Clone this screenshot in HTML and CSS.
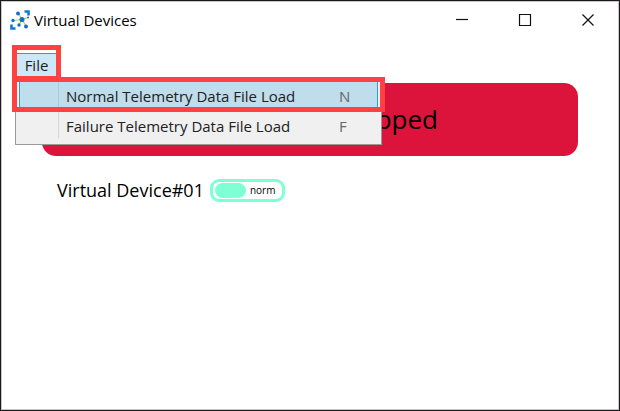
FILE: index.html
```html
<!DOCTYPE html>
<html lang="en">
<head>
<meta charset="utf-8">
<title>Virtual Devices</title>
<link rel="stylesheet" href="styles.css">
</head>
<body>
<div class="window">
  <header class="titlebar">
    <svg class="logo" viewBox="0 0 20 20" aria-hidden="true">
      <path d="M14.500 1.500h4v4M1.500 14.500v4h4" fill="none" stroke="#0f7bd4" stroke-width="2.600"/>
      <path d="M8 3L12 9.500L18 7.500M12 9.500L3 10.500M12 9.500L9 15M12 9.500L16 16" fill="none" stroke="#b4d455" stroke-width="1.200"/>
      <g fill="#0f6fc9">
        <circle cx="12" cy="9.500" r="2.500"/>
        <circle cx="8" cy="3.500" r="1.900"/>
        <circle cx="18" cy="7.500" r="1"/>
        <circle cx="3" cy="10.500" r="1.700"/>
        <circle cx="9" cy="15" r="1.700"/>
        <circle cx="16" cy="16.500" r="2"/>
      </g>
    </svg>
    <h1 class="title">Virtual Devices</h1>
    <div class="controls">
      <button class="control" type="button" aria-label="Minimize"><svg viewBox="0 0 14 14"><path d="M1 6.500h12"/></svg></button>
      <button class="control" type="button" aria-label="Maximize"><svg viewBox="0 0 14 14"><path d="M1.500 1.500h11v11h-11z"/></svg></button>
      <button class="control" type="button" aria-label="Close"><svg viewBox="0 0 14 14"><path d="M1.500 1.500l11 11M12.500 1.500l-11 11"/></svg></button>
    </div>
  </header>
  <nav class="menubar">
    <div class="menu">
      <button class="menu-button marked" type="button" aria-haspopup="true" aria-expanded="true">File</button>
      <div class="popup" role="menu">
        <button class="item active marked" type="button" role="menuitem"><span>Normal Telemetry Data File Load</span><kbd>N</kbd></button>
        <button class="item" type="button" role="menuitem"><span>Failure Telemetry Data File Load</span><kbd>F</kbd></button>
      </div>
    </div>
  </nav>
  <main class="content">
    <p class="status">Stopped</p>
    <div class="device">
      <span id="device-name">Virtual Device#01</span>
      <label class="toggle"><input type="checkbox" role="switch" aria-describedby="device-name">norm</label>
    </div>
  </main>
</div>
</body>
</html>
```
FILE: styles.css
```css
* {
  box-sizing: border-box;
}

body {
  margin: 0;
  font-family: "Open Sans", "Noto Sans", sans-serif;
  color: #000;
  background: #fff;
}

button {
  font: inherit;
  padding: 0;
  border: 0;
  background: none;
}

.window {
  min-height: 100vh;
  border: 1px solid #1c1a1d;
  box-shadow: inset 0 0 0 1px #c8c6c8;
}

.titlebar {
  display: flex;
  align-items: center;
  gap: 4px;
  height: 37px;
  padding: 0 0 0 9px;
}

.logo {
  width: 20px;
  height: 20px;
}

.title {
  margin: 0;
  font-size: 15px;
  font-weight: 400;
}

.controls {
  display: flex;
  margin-left: auto;
}

.control {
  display: grid;
  place-items: center;
  width: 63px;
  height: 37px;
}

.control svg {
  width: 14px;
  height: 14px;
  fill: none;
  stroke: #111;
  stroke-width: 1.2;
}

.menubar {
  padding: 15px 16px 0 15px;
}

.menu {
  position: relative;
  width: max-content;
}

.menu-button {
  display: block;
  width: 41px;
  height: 25px;
  border: 1px solid #26a0da;
  background: #cce8f6;
  font-size: 15px;
  line-height: 23px;
  color: #212121;
}

.marked {
  position: relative;
}

.marked::after {
  content: "";
  position: absolute;
  z-index: 1;
  border: 5px solid #ff4141;
}

.menu-button::after {
  inset: -9px -5px -4px -5px;
}

.popup {
  position: absolute;
  top: 24px;
  left: -1px;
  width: 367px;
  padding: 3px 3px 3px;
  border: 1px solid #999;
  background: linear-gradient(#d7d7d7, #d7d7d7) 42px 5px / 1px 55px no-repeat #f0f0f0;
}

.item {
  display: flex;
  justify-content: space-between;
  align-items: center;
  width: 100%;
  height: 30px;
  padding: 0 27px 0 47px;
  font-size: 15px;
  color: #212121;
}

.item.active {
  border: solid #26a0da;
  border-width: 0 1px;
  padding: 0 26px 0 46px;
  background: linear-gradient(#abc9d8, #abc9d8) 38px 0 / 1px 100% no-repeat #c0ddeb;
}

.item.active::after {
  inset: -4px -8px -1px -8px;
}

.item kbd {
  width: 12px;
  font-family: inherit;
  text-align: left;
  color: #666;
}

.content {
  padding: 5px 41px 0;
}

.status {
  margin: 0;
  padding: 0 140px;
  border-radius: 14px;
  background: #dc143c;
  font-size: 26px;
  line-height: 73px;
  text-align: right;
}

.device {
  display: flex;
  align-items: center;
  gap: 6px;
  padding: 22px 15px;
  font-size: 18px;
  line-height: 24px;
}

.toggle {
  display: flex;
  align-items: center;
  gap: 4px;
  width: 75px;
  height: 23px;
  padding: 0 2px;
  border: 3px solid #7fffd4;
  border-radius: 9px;
  font-size: 10px;
}

.toggle input {
  appearance: none;
  width: 31px;
  height: 15px;
  margin: 0;
  border-radius: 8px;
  background: #7fffd4;
}
```
